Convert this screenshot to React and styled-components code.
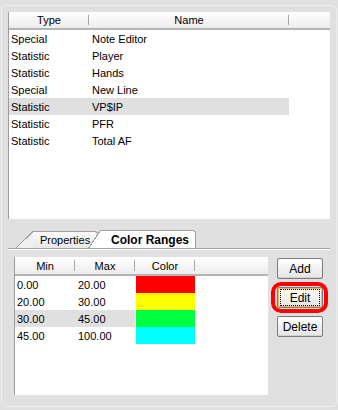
import React from "react";
import styled, { createGlobalStyle } from "styled-components";

const GlobalStyle = createGlobalStyle`
  body {
    margin: 0;
    background: #e0e0e0;
    font-family: "Liberation Sans", Arial, sans-serif;
    font-size: 11px;
    color: #000;
  }
`;

const Frame = styled.div`
  box-sizing: border-box;
  width: 336px;
  height: 402px;
  margin: 5px 0 0 1px;
  padding: 6px 0 0 6px;
  border: 1px solid #efefef;
  border-radius: 5px;
  display: flex;
  flex-direction: column;
`;

const ListBox = styled.div`
  box-sizing: border-box;
  width: ${(p) => p.w}px;
  height: ${(p) => p.h}px;
  background: #fff;
  border-left: 1px solid #9c9c9c;
  overflow: hidden;
`;

const HeaderRow = styled.div`
  display: flex;
  height: ${(p) => p.h}px;
  background: linear-gradient(#ffffff, #ececec);
  border-bottom: 2px solid #b4b4b4;
`;

const HeaderCell = styled.div`
  position: relative;
  width: ${(p) => (p.w ? `${p.w}px` : "auto")};
  flex: ${(p) => (p.w ? "none" : 1)};
  display: flex;
  align-items: center;
  justify-content: center;
  &::after {
    content: "";
    display: ${(p) => (p.w ? "block" : "none")};
    position: absolute;
    right: 0;
    top: 3px;
    bottom: 3px;
    width: 1px;
    background: #a8a8a8;
  }
`;

const Row = styled.div`
  display: flex;
  height: 17px;
  align-items: stretch;
`;

const Cell = styled.div`
  width: ${(p) => p.w}px;
  flex: none;
  display: flex;
  align-items: center;
  padding-left: ${(p) => p.pad}px;
  box-sizing: border-box;
  background: ${(p) => (p.sel ? "#e0e0e0" : "transparent")};
`;

const Swatch = styled.div`
  width: ${(p) => p.w}px;
  flex: none;
  margin-left: 1px;
  background: ${(p) => p.color};
`;

const TabStrip = styled.div`
  display: flex;
  align-items: flex-end;
  height: 19px;
  margin-top: 11px;
  width: 322px;
  padding-left: 25px;
  box-sizing: border-box;
  border-bottom: 1px solid #a4a4a4;
`;

const Tab = styled.div`
  position: relative;
  z-index: ${(p) => (p.active ? 2 : 1)};
  height: ${(p) => (p.active ? 18 : 17)}px;
  width: ${(p) => p.w}px;
  margin-left: ${(p) => p.ml}px;
  box-sizing: border-box;
  padding-left: ${(p) => p.pl}px;
  display: flex;
  align-items: center;
  font-weight: ${(p) => (p.active ? "bold" : "normal")};
  font-size: ${(p) => (p.active ? 12 : 11)}px;
  background: ${(p) => (p.active ? "#fff" : "linear-gradient(#fafafa, #e8e8e8)")};
  border-top: 1px solid #a0a0a0;
  border-right: 1px solid #a0a0a0;
  border-top-right-radius: 4px;
  &::before {
    content: "";
    position: absolute;
    left: -${(p) => p.slant}px;
    top: -1px;
    bottom: 0;
    width: ${(p) => p.slant}px;
    background: linear-gradient(
      to top left,
      ${(p) => (p.active ? "#fff" : "#f0f0f0")} 0 calc(50% - 1px),
      #a0a0a0 calc(50% - 1px) 50%,
      transparent 50%
    );
  }
`;

const Pane = styled.div`
  display: flex;
  width: 322px;
  padding: 7px 0 0 6px;
  box-sizing: border-box;
  border-top: 1px solid #fff;
  gap: 9px;
`;

const ButtonCol = styled.div`
  display: flex;
  flex-direction: column;
  gap: 8px;
  padding-top: 1px;
`;

const ButtonWrap = styled.div`
  position: relative;
`;

const Ring = styled.div`
  position: absolute;
  inset: -5px -5px -5px -6px;
  border: 4px solid #ff0000;
  border-radius: 10px;
`;

const Button = styled.button`
  width: 46px;
  height: 21px;
  padding: 0;
  font-family: "Liberation Sans", Arial, sans-serif;
  font-size: 12px;
  color: #000;
  border: 1px solid #7c7c7c;
  border-radius: 2px;
  background: linear-gradient(#ffffff, #e4e4e4);
  box-shadow: ${(p) => (p.focus ? "inset 0 0 0 1px #f3b44f" : "inset 0 -1px 0 #d0d0d0")};
  display: flex;
  align-items: center;
  justify-content: center;
`;

const FocusRect = styled.span`
  display: flex;
  align-items: center;
  justify-content: center;
  width: 38px;
  height: 15px;
  outline: 1px dotted #000;
`;

const stats = [
  ["Special", "Note Editor"],
  ["Statistic", "Player"],
  ["Statistic", "Hands"],
  ["Special", "New Line"],
  ["Statistic", "VP$IP", true],
  ["Statistic", "PFR"],
  ["Statistic", "Total AF"],
];

const ranges = [
  ["0.00", "20.00", "#ff0000"],
  ["20.00", "30.00", "#ffff00"],
  ["30.00", "45.00", "#00ff40", true],
  ["45.00", "100.00", "#00ffff"],
];

export default function App() {
  return (
    <>
      <GlobalStyle />
      <Frame>
        <ListBox w={322} h={207}>
          <HeaderRow h={16}>
            <HeaderCell w={80}>Type</HeaderCell>
            <HeaderCell w={200}>Name</HeaderCell>
            <HeaderCell />
          </HeaderRow>
          {stats.map(([type, name, sel]) => (
            <Row key={name}>
              <Cell w={80} pad={2} sel={sel}>
                {type}
              </Cell>
              <Cell w={200} pad={3} sel={sel}>
                {name}
              </Cell>
            </Row>
          ))}
        </ListBox>

        <TabStrip>
          <Tab w={65} ml={0} pl={7} slant={18}>
            Properties
          </Tab>
          <Tab active w={96} ml={2} pl={11} slant={12}>
            Color Ranges
          </Tab>
        </TabStrip>

        <Pane>
          <ListBox w={254} h={138}>
            <HeaderRow h={17}>
              <HeaderCell w={60}>Min</HeaderCell>
              <HeaderCell w={60}>Max</HeaderCell>
              <HeaderCell w={60}>Color</HeaderCell>
              <HeaderCell />
            </HeaderRow>
            {ranges.map(([min, max, color, sel]) => (
              <Row key={min}>
                <Cell w={60} pad={2} sel={sel}>
                  {min}
                </Cell>
                <Cell w={60} pad={3} sel={sel}>
                  {max}
                </Cell>
                <Swatch w={59} color={color} />
              </Row>
            ))}
          </ListBox>
          <ButtonCol>
            <Button>Add</Button>
            <ButtonWrap>
              <Button focus>
                <FocusRect>Edit</FocusRect>
              </Button>
              <Ring />
            </ButtonWrap>
            <Button>Delete</Button>
          </ButtonCol>
        </Pane>
      </Frame>
    </>
  );
}
